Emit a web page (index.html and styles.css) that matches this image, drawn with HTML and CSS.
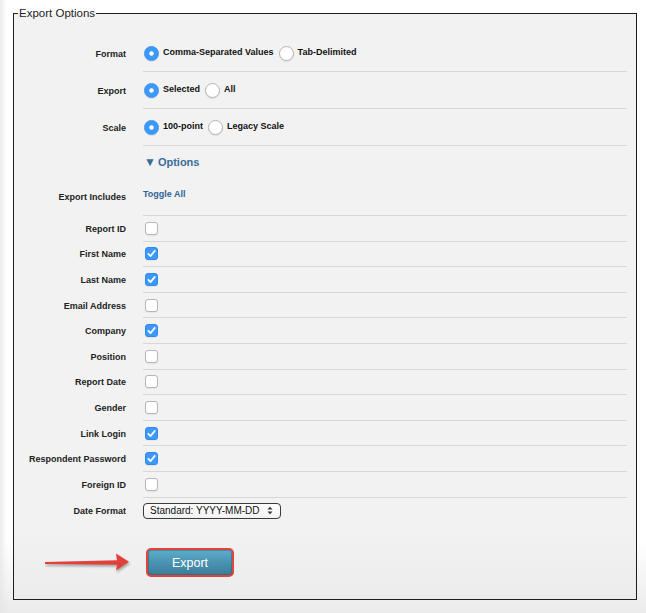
FILE: index.html
```html
<!DOCTYPE html>
<html>
<head>
<meta charset="utf-8">
<link rel="stylesheet" href="styles.css">
</head>
<body>
<fieldset class="export-options">
  <legend>Export Options</legend>

  <div class="row row-radio">
    <div class="label">Format</div>
    <div class="control sep">
      <span class="radio checked"></span><span class="opt">Comma-Separated Values</span>
      <span class="radio"></span><span class="opt">Tab-Delimited</span>
    </div>
  </div>
  <div class="row row-radio">
    <div class="label">Export</div>
    <div class="control sep">
      <span class="radio checked"></span><span class="opt">Selected</span>
      <span class="radio"></span><span class="opt">All</span>
    </div>
  </div>
  <div class="row row-radio">
    <div class="label">Scale</div>
    <div class="control sep">
      <span class="radio checked"></span><span class="opt">100-point</span>
      <span class="radio"></span><span class="opt">Legacy Scale</span>
    </div>
  </div>

  <div class="row row-options">
    <div class="label"></div>
    <div class="control"><span class="options-link"><span class="caret">▼</span>Options</span></div>
  </div>
  <div class="row row-includes">
    <div class="label">Export Includes</div>
    <div class="control sep"><span class="link">Toggle All</span></div>
  </div>

  <div class="row row-check"><div class="label">Report ID</div><div class="control sep"><span class="check"></span></div></div>
  <div class="row row-check"><div class="label">First Name</div><div class="control sep"><span class="check on"><svg viewBox="0 0 13 13" width="13" height="13"><path d="M3.3 6.9 L5.5 9.1 L9.8 3.9" fill="none" stroke="#fff" stroke-width="1.7" stroke-linecap="round" stroke-linejoin="round"/></svg></span></div></div>
  <div class="row row-check"><div class="label">Last Name</div><div class="control sep"><span class="check on"><svg viewBox="0 0 13 13" width="13" height="13"><path d="M3.3 6.9 L5.5 9.1 L9.8 3.9" fill="none" stroke="#fff" stroke-width="1.7" stroke-linecap="round" stroke-linejoin="round"/></svg></span></div></div>
  <div class="row row-check"><div class="label">Email Address</div><div class="control sep"><span class="check"></span></div></div>
  <div class="row row-check"><div class="label">Company</div><div class="control sep"><span class="check on"><svg viewBox="0 0 13 13" width="13" height="13"><path d="M3.3 6.9 L5.5 9.1 L9.8 3.9" fill="none" stroke="#fff" stroke-width="1.7" stroke-linecap="round" stroke-linejoin="round"/></svg></span></div></div>
  <div class="row row-check"><div class="label">Position</div><div class="control sep"><span class="check"></span></div></div>
  <div class="row row-check"><div class="label">Report Date</div><div class="control sep"><span class="check"></span></div></div>
  <div class="row row-check"><div class="label">Gender</div><div class="control sep"><span class="check"></span></div></div>
  <div class="row row-check"><div class="label">Link Login</div><div class="control sep"><span class="check on"><svg viewBox="0 0 13 13" width="13" height="13"><path d="M3.3 6.9 L5.5 9.1 L9.8 3.9" fill="none" stroke="#fff" stroke-width="1.7" stroke-linecap="round" stroke-linejoin="round"/></svg></span></div></div>
  <div class="row row-check"><div class="label">Respondent Password</div><div class="control sep"><span class="check on"><svg viewBox="0 0 13 13" width="13" height="13"><path d="M3.3 6.9 L5.5 9.1 L9.8 3.9" fill="none" stroke="#fff" stroke-width="1.7" stroke-linecap="round" stroke-linejoin="round"/></svg></span></div></div>
  <div class="row row-check"><div class="label">Foreign ID</div><div class="control sep"><span class="check"></span></div></div>

  <div class="row row-date">
    <div class="label">Date Format</div>
    <div class="control">
      <div class="select"><span>Standard: YYYY-MM-DD</span><svg width="6" height="9" viewBox="0 0 6 9"><path d="M0.5 3.5 L3 0.8 L5.5 3.5 Z M0.5 5.5 L3 8.2 L5.5 5.5 Z" fill="#333"/></svg></div>
    </div>
  </div>

  <div class="button-row">
    <svg class="arrow" width="88" height="24" viewBox="0 0 88 24">
      <path d="M0 12 L72 10.2 L71 3.5 L84 11.8 L71 20.5 L72 14.8 L0 14 Z" fill="#e2403a"/>
    </svg>
    <div class="export-btn">Export</div>
  </div>
</fieldset>
</body>
</html>
```

FILE: styles.css
```css
* { box-sizing: border-box; }

html, body { height: 100%; }

body {
  margin: 0;
  font-family: "Liberation Sans", Arial, Helvetica, sans-serif;
  color: #222;
  background: linear-gradient(to bottom, #ffffff 0, #ffffff 540px, #ebebeb 613px);
  box-shadow: inset 7px 0 6px -5px #e4e4e4;
  overflow: hidden;
}

.export-options {
  margin: 6px 9px 0 13px;
  padding: 15px 0 22px 0;
  border: 1px solid #1e1e1e;
  background: linear-gradient(to bottom, #f2f2f2 0, #f2f2f2 88%, #ececec 100%);
  min-width: 0;
}

.export-options legend {
  margin-left: 4px;
  padding: 0 1px;
  font-size: 11.5px;
  line-height: 14px;
  color: #222;
}

.row {
  display: grid;
  grid-template-columns: 112px 484px;
  column-gap: 17px;
}

.label {
  align-self: center;
  text-align: right;
  font-size: 9px;
  font-weight: bold;
  color: #222;
}

.control {
  display: flex;
  align-items: center;
  font-size: 9px;
  font-weight: bold;
  color: #111;
}

.sep { border-bottom: 1px solid #d7d7d7; }

.row-radio .control { height: 37px; }
.row-options .control { height: 32px; }
.row-includes .control { height: 38px; padding-bottom: 5px; }
.row-check .control { height: 25.6px; }
.row-date .control { height: 26px; }

.radio {
  flex: none;
  width: 15px;
  height: 15px;
  margin-left: 1px;
  border-radius: 50%;
  background: #fff;
  border: 1px solid #b4b4b4;
  box-shadow: 0 1px 1px rgba(0, 0, 0, 0.08);
}

.radio + .opt { margin-left: 4px; }
.opt { padding-bottom: 3px; margin-right: 4px; }

.radio.checked {
  border-color: #3a8fe8;
  background: radial-gradient(circle, #ffffff 0, #ffffff 1.8px, #3b99fc 2.6px);
}

.options-link {
  display: flex;
  align-items: center;
  font-size: 11px;
  font-weight: bold;
  color: #3b6c98;
  margin-left: 1px;
}

.caret {
  font-size: 12px;
  margin-right: 2px;
}

.link {
  font-size: 9px;
  font-weight: bold;
  color: #2f6595;
}

.check {
  flex: none;
  display: block;
  width: 13px;
  height: 13px;
  margin-left: 2px;
  border: 1px solid #b5b5b5;
  border-radius: 3px;
  background: #fff;
  box-shadow: 0 1px 1px rgba(0, 0, 0, 0.05);
}

.check svg { display: block; margin: -1px; }

.check.on {
  background: #3b99fc;
  border-color: #3189ee;
}

.select {
  display: flex;
  align-items: center;
  justify-content: space-between;
  width: 138px;
  height: 16px;
  padding: 0 7px 0 6px;
  border: 1px solid #3a3a3a;
  border-radius: 4px;
  background: linear-gradient(to bottom, #ffffff, #f1f1f1);
  font-size: 10px;
  font-weight: normal;
  color: #111;
}

.button-row {
  display: flex;
  align-items: center;
  margin-top: 24px;
  height: 29px;
}

.arrow {
  display: block;
  margin-left: 31px;
  filter: drop-shadow(1px 2px 1px rgba(0, 0, 0, 0.3));
}

.export-btn {
  display: flex;
  align-items: center;
  justify-content: center;
  margin-left: 13px;
  width: 88px;
  height: 29px;
  border: 2px solid #e2443b;
  border-radius: 5px;
  background: linear-gradient(to bottom, #5eadcc 0, #4a93b2 50%, #3b7d99 100%);
  box-shadow: inset 0 0 0 1px rgba(30, 70, 90, 0.35);
  color: #fff;
  font-size: 12.5px;
  padding-top: 1px;
}
```
